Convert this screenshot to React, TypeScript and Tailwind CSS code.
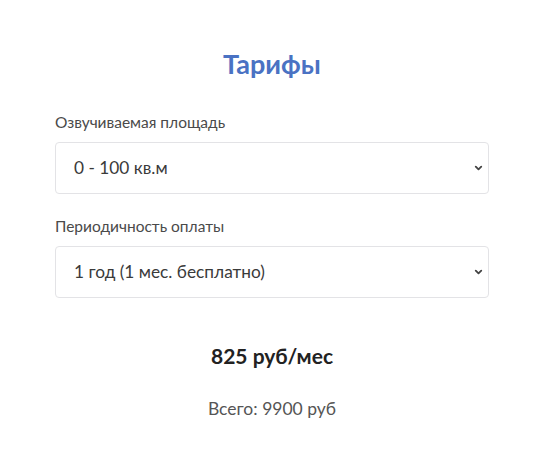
import { ChevronDown } from 'lucide-react'

const font = { fontFamily: 'Lato, "Noto Sans", sans-serif' }

function Select({ label, value }: { label: string; value: string }) {
  return (
    <div className="flex flex-col">
      <label className="text-[15.5px] text-[#4a4a4a] leading-[20px] mb-[10px]">{label}</label>
      <div className="relative h-[52px] border border-[#e3e3e6] rounded-[4px] bg-white flex items-center pl-[18px] pr-[40px]">
        <span className="text-[17.3px] text-[#3a3a3a]">{value}</span>
        <ChevronDown className="absolute right-[4px] top-1/2 -translate-y-1/2 w-[11px] h-[11px] text-[#444]" strokeWidth={4} />
      </div>
    </div>
  )
}

export default function App() {
  return (
    <div className="min-h-screen bg-white" style={font}>
      <div className="ml-[55px] w-[434px] pt-[46px] flex flex-col">
        <h1 className="text-center text-[27px] font-bold text-[#4a72c3] leading-[36px]">Тарифы</h1>
        <div className="mt-[30px]">
          <Select label="Озвучиваемая площадь" value="0 - 100 кв.м" />
        </div>
        <div className="mt-[22px]">
          <Select label="Периодичность оплаты" value="1 год (1 мес. бесплатно)" />
        </div>
        <p className="mt-[45px] text-center text-[21px] font-bold text-[#222] leading-[26px]">825 руб/мес</p>
        <p className="mt-[29px] text-center text-[17.5px] text-[#555] leading-[22px]">Всего: 9900 руб</p>
      </div>
    </div>
  )
}
